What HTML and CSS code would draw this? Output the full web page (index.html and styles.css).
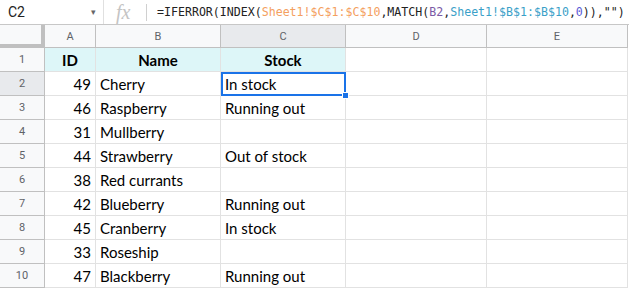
FILE: index.html
```html
<!DOCTYPE html>
<html lang="en">
<head>
    <meta charset="UTF-8">
    <title>Stock lookup</title>
    <link rel="stylesheet" href="styles.css">
</head>
<body>
    <div class="formula-bar">
        <div class="name-box">
            <span>C2</span>
            <span class="caret">&#9662;</span>
        </div>
        <div class="fx">fx</div>
        <div class="formula">=IFERROR(INDEX(<span class="ref-orange">Sheet1!$C$1:$C$10</span>,MATCH(<span class="ref-purple">B2</span>,<span class="ref-blue">Sheet1!$B$1:$B$10</span>,<span class="num">0</span>)),"")</div>
    </div>

    <div class="sheet">
        <div class="corner"></div>
        <div class="col-head">A</div>
        <div class="col-head">B</div>
        <div class="col-head active">C</div>
        <div class="col-head">D</div>
        <div class="col-head">E</div>

        <div class="row-head">1</div>
        <div class="cell head">ID</div>
        <div class="cell head">Name</div>
        <div class="cell head">Stock</div>
        <div class="cell"></div>
        <div class="cell"></div>

        <div class="row-head active">2</div>
        <div class="cell num">49</div>
        <div class="cell">Cherry</div>
        <div class="cell selected">In stock<span class="handle"></span></div>
        <div class="cell"></div>
        <div class="cell"></div>

        <div class="row-head">3</div>
        <div class="cell num">46</div>
        <div class="cell">Raspberry</div>
        <div class="cell">Running out</div>
        <div class="cell"></div>
        <div class="cell"></div>

        <div class="row-head">4</div>
        <div class="cell num">31</div>
        <div class="cell">Mullberry</div>
        <div class="cell"></div>
        <div class="cell"></div>
        <div class="cell"></div>

        <div class="row-head">5</div>
        <div class="cell num">44</div>
        <div class="cell">Strawberry</div>
        <div class="cell">Out of stock</div>
        <div class="cell"></div>
        <div class="cell"></div>

        <div class="row-head">6</div>
        <div class="cell num">38</div>
        <div class="cell">Red currants</div>
        <div class="cell"></div>
        <div class="cell"></div>
        <div class="cell"></div>

        <div class="row-head">7</div>
        <div class="cell num">42</div>
        <div class="cell">Blueberry</div>
        <div class="cell">Running out</div>
        <div class="cell"></div>
        <div class="cell"></div>

        <div class="row-head">8</div>
        <div class="cell num">45</div>
        <div class="cell">Cranberry</div>
        <div class="cell">In stock</div>
        <div class="cell"></div>
        <div class="cell"></div>

        <div class="row-head">9</div>
        <div class="cell num">33</div>
        <div class="cell">Roseship</div>
        <div class="cell"></div>
        <div class="cell"></div>
        <div class="cell"></div>

        <div class="row-head">10</div>
        <div class="cell num">47</div>
        <div class="cell">Blackberry</div>
        <div class="cell">Running out</div>
        <div class="cell"></div>
        <div class="cell"></div>
    </div>
</body>
</html>
```

FILE: styles.css
```css
* {
    margin: 0;
    padding: 0;
    box-sizing: border-box;
}

body {
    background: white;
    font-family: Roboto, Arial, sans-serif;
    color: #000;
    overflow: hidden;
}

/* formula bar */
.formula-bar {
    display: flex;
    align-items: center;
    height: 25px;
    border-bottom: 1px solid #c7c7c7;
}

.name-box {
    flex-shrink: 0;
    display: flex;
    align-items: center;
    justify-content: space-between;
    width: 104px;
    height: 100%;
    padding: 0 7px 0 8px;
    border-right: 1px solid #e0e0e0;
    font-size: 14px;
    color: #222;
}

.name-box .caret {
    font-size: 9px;
    color: #666;
}

.fx {
    flex-shrink: 0;
    width: 43px;
    height: 17px;
    margin-right: 10px;
    border-right: 1px solid #d0d0d0;
    padding-left: 12px;
    font-family: "Liberation Serif", serif;
    font-style: italic;
    font-size: 20px;
    line-height: 16px;
    color: #c4c4c4;
}

.formula {
    flex-shrink: 0;
    font-family: "DejaVu Sans Mono", monospace;
    font-size: 11.6px;
    color: #222;
    white-space: nowrap;
}

.ref-orange { color: #f4a05e; }
.ref-purple { color: #7b5aa6; }
.ref-blue   { color: #3aa0c8; }
.formula .num { color: #5b5bd6; }

/* grid */
.sheet {
    display: grid;
    grid-template-columns: 45px 51px 125px 125px 141px 141px;
    grid-template-rows: 23px repeat(10, 24px);
}

.corner {
    background: #f8f9fa;
    border-right: 4px solid #c0c0c0;
    border-bottom: 4px solid #c0c0c0;
}

.col-head {
    display: flex;
    align-items: center;
    justify-content: center;
    background: #f8f9fa;
    border-right: 1px solid #c0c0c0;
    border-bottom: 1px solid #c0c0c0;
    font-size: 11px;
    color: #5f6368;
}

.row-head {
    display: flex;
    align-items: center;
    justify-content: center;
    background: #f8f9fa;
    border-right: 1px solid #c0c0c0;
    border-bottom: 1px solid #c0c0c0;
    font-size: 11px;
    color: #5f6368;
}

.col-head.active,
.row-head.active {
    background: #e8eaed;
}

.cell {
    position: relative;
    display: flex;
    align-items: flex-end;
    padding: 0 4px 2px 4px;
    border-right: 1px solid #e2e2e2;
    border-bottom: 1px solid #e2e2e2;
    font-family: Lato, "Open Sans", sans-serif;
    font-size: 15px;
    white-space: nowrap;
}

.cell.num {
    justify-content: flex-end;
}

.cell.head {
    justify-content: center;
    background: #ddf6f8;
    font-weight: bold;
}

.cell.selected {
    outline: 2px solid #1a73e8;
    outline-offset: -2px;
    z-index: 1;
}

.handle {
    position: absolute;
    right: -4px;
    bottom: -4px;
    width: 7px;
    height: 7px;
    background: #1a73e8;
    border: 1px solid white;
}
```
